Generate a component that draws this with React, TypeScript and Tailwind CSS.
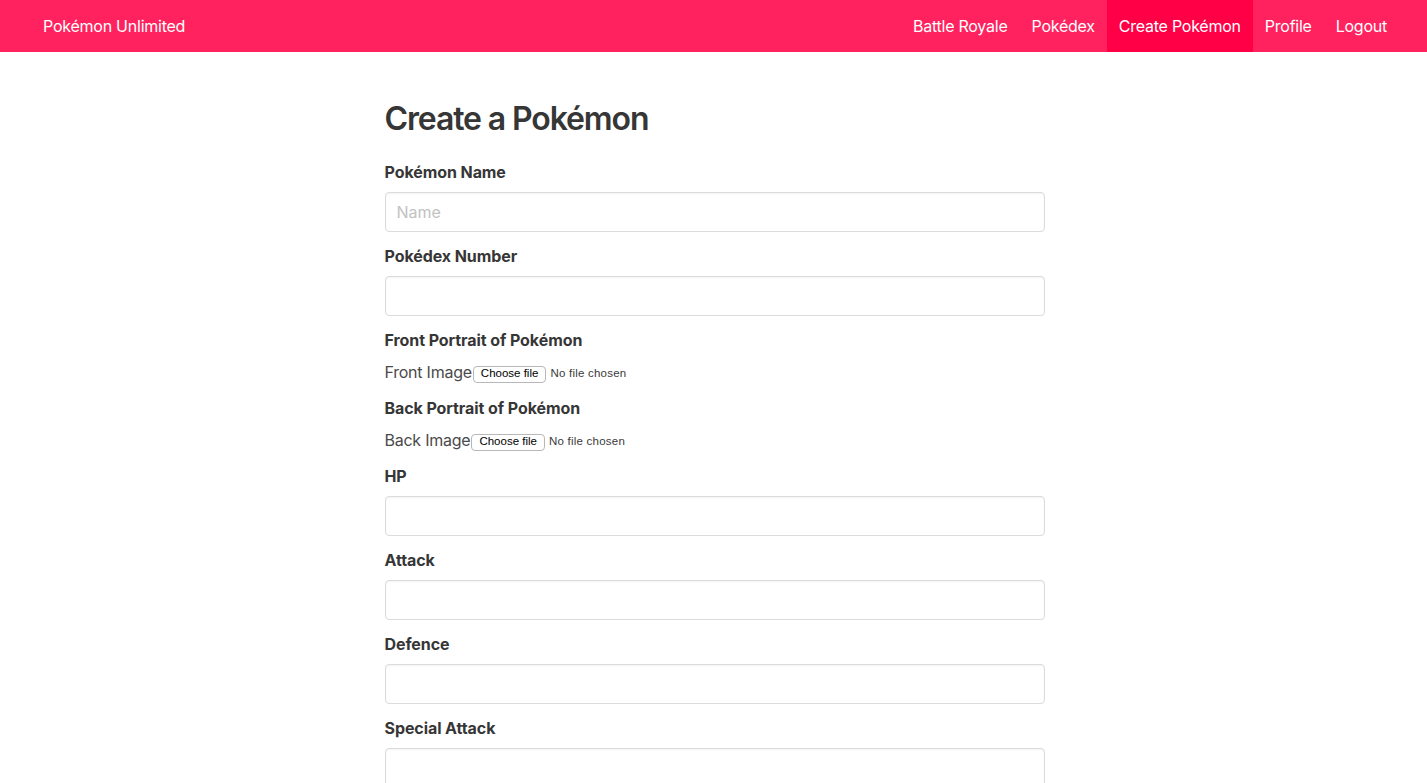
import React from "react";

const font = { fontFamily: "Inter, 'Noto Sans', 'Liberation Sans', sans-serif" };
const sys = { fontFamily: "'Liberation Sans', Arial, sans-serif" };

function TextField({ label, placeholder }: { label: string; placeholder?: string }) {
  return (
    <div className="mb-3">
      <label className="block text-[16px] leading-6 font-bold text-[#363636] mb-2 tracking-[-0.005em]">{label}</label>
      <input
        className="block w-full h-10 rounded-[4px] border border-[#dbdbdb] bg-white px-[11px] text-[16px] text-[#363636] placeholder:text-[#c2c2c2] shadow-[inset_0_1px_2px_rgba(10,10,10,0.05)] outline-none"
        placeholder={placeholder}
      />
    </div>
  );
}

function FileField({ label, name }: { label: string; name: string }) {
  return (
    <div className="mb-3">
      <label className="block text-[16px] leading-6 font-bold text-[#363636] mb-2 tracking-[-0.005em]">{label}</label>
      <div className="flex items-center h-6 text-[16px] text-[#4a4a4a] tracking-[-0.015em]">
        <span>{name}</span>
        <span
          className="ml-[1px] translate-y-[2px] inline-flex items-center h-[17px] px-[7px] rounded-[4px] border border-[#b8b8b8] bg-white text-[11.5px] text-black leading-none tracking-normal"
          style={sys}
        >
          Choose file
        </span>
        <span className="ml-[4px] translate-y-[2px] text-[11.5px] text-[#3a3a3a] tracking-[0.02em]" style={sys}>
          No file chosen
        </span>
      </div>
    </div>
  );
}

export default function App() {
  return (
    <div className="min-h-screen bg-white" style={font}>
      <nav className="h-[52px] bg-[#ff225e] flex items-stretch justify-between pl-[31px] pr-[28px] text-white text-[16px] tracking-[-0.015em]">
        <div className="flex items-center px-3">Pokémon Unlimited</div>
        <div className="flex items-stretch">
          <a className="flex items-center px-3">Battle Royale</a>
          <a className="flex items-center px-3">Pokédex</a>
          <a className="flex items-center px-3 bg-[#ff0047]">Create Pokémon</a>
          <a className="flex items-center px-3">Profile</a>
          <a className="flex items-center px-3">Logout</a>
        </div>
      </nav>
      <section className="pt-12 pb-12">
        <div className="w-[660px] mx-auto translate-x-[1px]">
          <h1 className="text-[32px] leading-[36px] font-semibold text-[#363636] mb-6 tracking-[-0.035em] translate-y-[1px]">
            Create a Pokémon
          </h1>
          <TextField label="Pokémon Name" placeholder="Name" />
          <TextField label="Pokédex Number" />
          <FileField label="Front Portrait of Pokémon" name="Front Image" />
          <FileField label="Back Portrait of Pokémon" name="Back Image" />
          <TextField label="HP" />
          <TextField label="Attack" />
          <TextField label="Defence" />
          <TextField label="Special Attack" />
        </div>
      </section>
    </div>
  );
}
